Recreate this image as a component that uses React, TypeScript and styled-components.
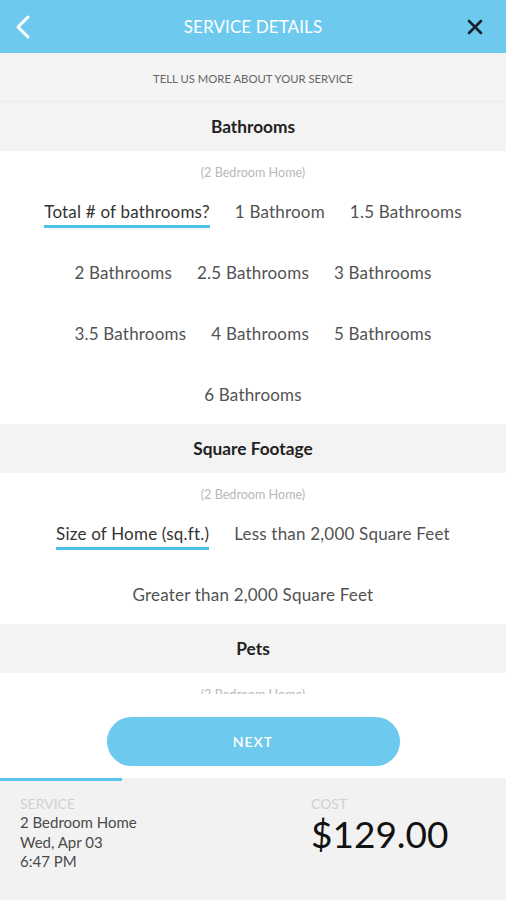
import React from "react";
import styled, { createGlobalStyle } from "styled-components";

const Global = createGlobalStyle`
  html, body { margin: 0; padding: 0; background: #fff; }
  body { font-family: Lato, "Open Sans", sans-serif; -webkit-font-smoothing: antialiased; }
  * { box-sizing: border-box; }
`;

const BLUE = "#6dcaee";

const Screen = styled.div`
  width: 506px;
  height: 900px;
  display: flex;
  flex-direction: column;
  overflow: hidden;
  background: #fff;
`;

const Header = styled.header`
  height: 53px;
  flex: none;
  background: ${BLUE};
  display: grid;
  grid-template-columns: 56px 1fr 56px;
  align-items: center;
`;

const IconButton = styled.button<{ $side: "left" | "right" }>`
  border: 0;
  background: none;
  padding: 0;
  height: 53px;
  display: flex;
  align-items: center;
  justify-content: ${(p) => (p.$side === "left" ? "flex-start" : "flex-end")};
  padding-left: ${(p) => (p.$side === "left" ? "14px" : "0")};
  padding-right: ${(p) => (p.$side === "right" ? "23px" : "0")};
`;

const Title = styled.h1`
  margin: 0;
  text-align: center;
  color: #fff;
  font-size: 17px;
  font-weight: 400;
  letter-spacing: 0.1px;
  text-transform: uppercase;
`;

const Scroll = styled.div`
  flex: 1;
  overflow: hidden;
`;

const Intro = styled.div`
  height: 49px;
  background: #f4f4f4;
  border-bottom: 1px solid #ececec;
  display: flex;
  align-items: center;
  justify-content: center;
  font-size: 11.3px;
  color: #666;
  text-transform: uppercase;
  padding-top: 2px;
`;

const SectionHeader = styled.div`
  height: 49px;
  background: #f3f3f3;
  display: flex;
  align-items: center;
  justify-content: center;
  font-size: 17.3px;
  font-weight: 700;
  color: #222;
`;

const SectionBody = styled.div`
  background: #fff;
`;

const Note = styled.div`
  padding-top: 14px;
  line-height: 15px;
  font-size: 12.6px;
  color: #b8b8b8;
  text-align: center;
`;

const Options = styled.div`
  display: flex;
  flex-wrap: wrap;
  justify-content: center;
  column-gap: 25px;
  padding: 0 20px;
`;

const Option = styled.div`
  height: 61px;
  display: flex;
  align-items: center;
`;

const OptionLabel = styled.span<{ $selected?: boolean }>`
  display: block;
  padding: 8px 0 4px;
  line-height: 19px;
  font-size: 17px;
  letter-spacing: 0.2px;
  color: ${(p) => (p.$selected ? "#333" : "#525252")};
  border-bottom: 3px solid ${(p) => (p.$selected ? "#4ec1ea" : "transparent")};
`;

const Bottom = styled.div`
  flex: none;
  background: #fff;
`;

const ButtonWrap = styled.div`
  height: 84px;
  display: flex;
  justify-content: center;
  padding-top: 23px;
`;

const NextButton = styled.button`
  width: 293px;
  height: 49px;
  border: 0;
  border-radius: 25px;
  background: ${BLUE};
  color: #fff;
  font-family: Lato, sans-serif;
  font-size: 14px;
  font-weight: 600;
  letter-spacing: 1px;
`;

const Track = styled.div`
  height: 3px;
  background: #f2f2f2;
`;

const Fill = styled.div`
  height: 100%;
  background: #5cc4ea;
`;

const Footer = styled.footer`
  height: 119px;
  background: #f2f2f2;
  display: grid;
  grid-template-columns: 291px 1fr;
  padding: 14px 0 0 20px;
`;

const Col = styled.div`
  display: flex;
  flex-direction: column;
`;

const Caption = styled.div`
  font-size: 14px;
  line-height: 18px;
  color: #d0d0d0;
  text-transform: uppercase;
`;

const Line = styled.div`
  font-size: 15px;
  line-height: 19.5px;
  color: #4a4a4a;
`;

const Price = styled.div`
  font-size: 37px;
  line-height: 40px;
  color: #111;
  margin-top: 1px;
`;

type Section = { title: string; options: string[] };

const sections: Section[] = [
  {
    title: "Bathrooms",
    options: [
      "Total # of bathrooms?",
      "1 Bathroom",
      "1.5 Bathrooms",
      "2 Bathrooms",
      "2.5 Bathrooms",
      "3 Bathrooms",
      "3.5 Bathrooms",
      "4 Bathrooms",
      "5 Bathrooms",
      "6 Bathrooms",
    ],
  },
  {
    title: "Square Footage",
    options: [
      "Size of Home (sq.ft.)",
      "Less than 2,000 Square Feet",
      "Greater than 2,000 Square Feet",
    ],
  },
  { title: "Pets", options: [] },
];

export default function App() {
  return (
    <>
      <Global />
      <Screen>
        <Header>
          <IconButton $side="left" aria-label="Back">
            <svg width="18" height="26" viewBox="0 0 18 26">
              <path d="M14 3 L4 13 L14 23" fill="none" stroke="#fff" strokeWidth="3" strokeLinecap="round" strokeLinejoin="round" />
            </svg>
          </IconButton>
          <Title>Service Details</Title>
          <IconButton $side="right" aria-label="Close">
            <svg width="16" height="16" viewBox="0 0 16 16">
              <path d="M2 2 L14 14 M14 2 L2 14" stroke="#14222e" strokeWidth="2.6" strokeLinecap="round" />
            </svg>
          </IconButton>
        </Header>
        <Scroll>
          <Intro>Tell us more about your service</Intro>
          {sections.map((s) => (
            <React.Fragment key={s.title}>
              <SectionHeader>{s.title}</SectionHeader>
              <SectionBody>
                <Note>(2 Bedroom Home)</Note>
                <Options>
                  {s.options.map((o, i) => (
                    <Option key={o}>
                      <OptionLabel $selected={i === 0}>{o}</OptionLabel>
                    </Option>
                  ))}
                </Options>
              </SectionBody>
            </React.Fragment>
          ))}
        </Scroll>
        <Bottom>
          <ButtonWrap>
            <NextButton>NEXT</NextButton>
          </ButtonWrap>
          <Track>
            <Fill style={{ width: "122px" }} />
          </Track>
          <Footer>
            <Col>
              <Caption>Service</Caption>
              <Line>2 Bedroom Home</Line>
              <Line>Wed, Apr 03</Line>
              <Line>6:47 PM</Line>
            </Col>
            <Col>
              <Caption>Cost</Caption>
              <Price>$129.00</Price>
            </Col>
          </Footer>
        </Bottom>
      </Screen>
    </>
  );
}
